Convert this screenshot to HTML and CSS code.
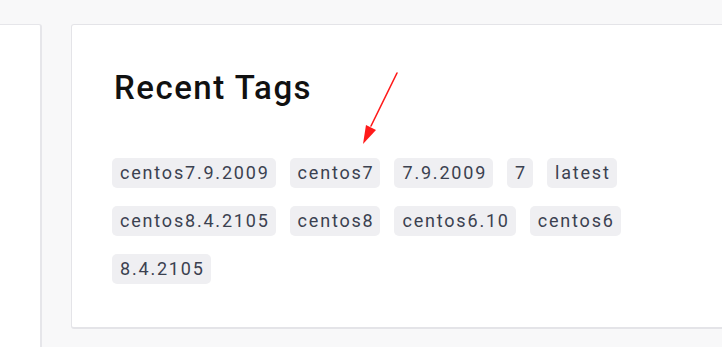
FILE: index.html
```html
<!DOCTYPE html>
<html>
<head>
<meta charset="utf-8">
<link rel="stylesheet" href="styles.css">
</head>
<body>
<div class="page">
  <div class="side-card"></div>
  <section class="tags-card">
    <h2 class="title">Recent Tags</h2>
    <div class="tags">
      <span class="tag">centos7.9.2009</span>
      <span class="tag">centos7</span>
      <span class="tag">7.9.2009</span>
      <span class="tag">7</span>
      <span class="tag">latest</span>
      <span class="tag">centos8.4.2105</span>
      <span class="tag">centos8</span>
      <span class="tag">centos6.10</span>
      <span class="tag">centos6</span>
      <span class="tag">8.4.2105</span>
    </div>
    <svg class="arrow" width="50" height="90" viewBox="0 0 50 90">
      <line x1="42" y1="3" x2="16" y2="56" stroke="#ff1a1a" stroke-width="1.6" stroke-linecap="round"/>
      <polygon points="8,74 11,55 21,60" fill="#ff1a1a"/>
    </svg>
  </section>
</div>
</body>
</html>
```

FILE: styles.css
```css
html, body {
  margin: 0;
  padding: 0;
  background: #f8f8f9;
}
.page {
  display: flex;
  align-items: flex-start;
  gap: 29px;
  padding-top: 24px;
  width: 722px;
  height: 347px;
  box-sizing: border-box;
  overflow: hidden;
  font-family: Roboto, "Liberation Sans", sans-serif;
}
.side-card {
  flex: 0 0 42px;
  height: 323px;
  background: #fff;
  border-top: 1px solid #e6e6ea;
  border-right: 2px solid #e6e6ea;
  border-top-right-radius: 3px;
  box-sizing: border-box;
}
.tags-card {
  position: relative;
  flex: 0 0 auto;
  width: 680px;
  background: #fff;
  border: 1px solid #e4e4e8;
  border-bottom-width: 2px;
  border-radius: 3px;
  padding: 44px 42px 41px 42px;
  box-sizing: border-box;
  height: 305px;
}
.title {
  margin: 0;
  font-size: 33px;
  line-height: 38px;
  font-weight: 500;
  letter-spacing: 1.5px;
  color: #111;
}
.tags {
  margin-top: 51px;
  display: flex;
  flex-wrap: wrap;
  column-gap: 14px;
  row-gap: 18px;
  width: 540px;
  margin-left: -2px;
}
.tag {
  display: inline-block;
  height: 30px;
  line-height: 30px;
  padding: 0 6px 0 8px;
  font-size: 18px;
  letter-spacing: 1.8px;
  color: #3b4150;
  background: #efeff2;
  border-radius: 5px;
}
.arrow {
  position: absolute;
  left: 283px;
  top: 45px;
}
```
